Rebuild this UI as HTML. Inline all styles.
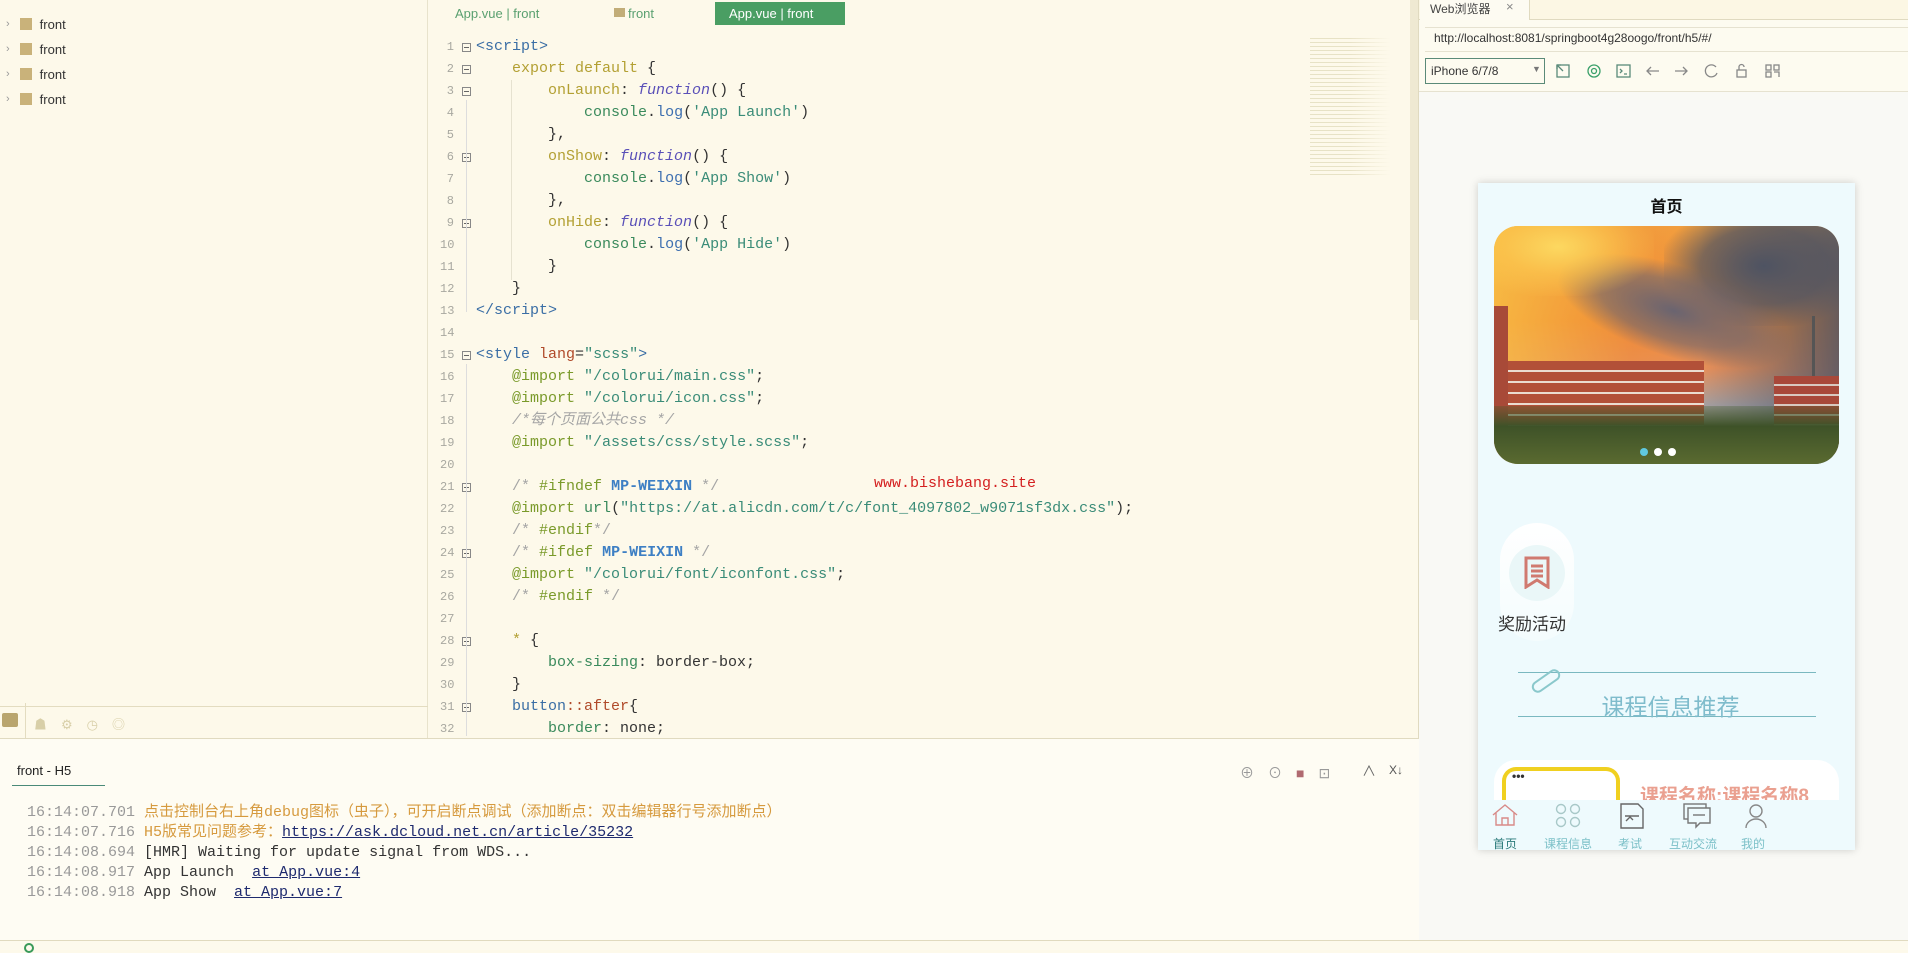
<!DOCTYPE html>
<html><head><meta charset="utf-8">
<style>
*{margin:0;padding:0;box-sizing:border-box}
body{width:1908px;height:950px;overflow:hidden;background:#fdf9ea;font-family:"Liberation Sans","Noto Sans CJK SC",sans-serif;position:relative}
.abs{position:absolute}
.mono{font-family:"Liberation Mono","Noto Sans CJK SC",monospace}
.side-row{position:absolute;left:0;height:22px;font-size:13px;color:#333;display:flex;align-items:center}
.code{position:absolute;left:440px;top:36px;font-size:15px;line-height:22px;white-space:pre;color:#333}
.fold{position:absolute;left:462px;width:9px;height:9px;border:1px solid #888;font-size:0}
.fold:after{content:"";position:absolute;left:1px;top:3px;width:5px;height:1px;background:#666}
.k{color:#b3a033}.f{color:#5a50b8;font-style:italic}.g{color:#3a8a5c}.b{color:#3d6fb0}.s{color:#3a8c78}.t{color:#3a6ea5}.c{color:#a5a5a5}.m{color:#3d7fc4;font-weight:bold}.r{color:#b04a2a}.p{color:#7a9a2a}
.log{position:absolute;left:27px;font-size:15px;line-height:20px;color:#333;white-space:pre}
.nav{position:absolute;top:800px;width:70px;text-align:center;font-size:12px;color:#7cc0c8}
</style></head><body>
<div class="abs" style="left:0;top:0;width:428px;height:739px;background:#fdf9ea;border-right:1px solid #e8e3cc"></div>
<div class="side-row" style="top:13px"><span style="margin-left:6px;color:#999;font-size:11px">›</span><span style="display:inline-block;width:12px;height:12px;background:#c9b27a;margin-left:10px"></span><span style="margin-left:8px">front</span></div>
<div class="side-row" style="top:38px"><span style="margin-left:6px;color:#999;font-size:11px">›</span><span style="display:inline-block;width:12px;height:12px;background:#c9b27a;margin-left:10px"></span><span style="margin-left:8px">front</span></div>
<div class="side-row" style="top:63px"><span style="margin-left:6px;color:#999;font-size:11px">›</span><span style="display:inline-block;width:12px;height:12px;background:#c9b27a;margin-left:10px"></span><span style="margin-left:8px">front</span></div>
<div class="side-row" style="top:88px"><span style="margin-left:6px;color:#999;font-size:11px">›</span><span style="display:inline-block;width:12px;height:12px;background:#c9b27a;margin-left:10px"></span><span style="margin-left:8px">front</span></div>
<div class="abs" style="left:0;top:706px;width:428px;height:33px;border-top:1px solid #e3dcc0"></div>
<div class="abs" style="left:2px;top:713px;width:16px;height:14px;background:#b9a56e;border-radius:2px"></div>
<div class="abs" style="left:25px;top:703px;width:1px;height:36px;background:#e3dcc0"></div>
<div class="abs" style="left:34px;top:714px;font-size:13px;color:#d8cfa8;letter-spacing:14px">☗⚙◷◎</div>

<div class="abs" style="left:455px;top:6px;font-size:13px;color:#5aa070">App.vue | front</div>
<div class="abs" style="left:614px;top:8px;width:11px;height:9px;background:#c2ad78"></div>
<div class="abs" style="left:628px;top:6px;font-size:13px;color:#5aa070">front</div>
<div class="abs" style="left:715px;top:2px;width:130px;height:23px;background:#4a9e63"></div>
<div class="abs" style="left:729px;top:6px;font-size:13px;color:#fff">App.vue | front</div>

<div class="mono" style="position:absolute;left:440px;top:36px;width:14px;font-size:12px;line-height:22px;color:#a8a8a0;text-align:right">1<br>2<br>3<br>4<br>5<br>6<br>7<br>8<br>9<br>10<br>11<br>12<br>13<br>14<br>15<br>16<br>17<br>18<br>19<br>20<br>21<br>22<br>23<br>24<br>25<br>26<br>27<br>28<br>29<br>30<br>31<br>32</div>
<div class="fold" style="top:43px"></div><div class="fold" style="top:65px"></div><div class="fold" style="top:87px"></div><div class="fold" style="top:153px"></div><div class="fold" style="top:219px"></div><div class="fold" style="top:351px"></div><div class="fold" style="top:483px"></div><div class="fold" style="top:549px"></div><div class="fold" style="top:637px"></div><div class="fold" style="top:703px"></div>
<div class="abs" style="left:466px;top:100px;width:1px;height:212px;background:#ddd"></div>
<div class="abs" style="left:466px;top:364px;width:1px;height:372px;background:#ddd"></div>
<div class="abs" style="left:511px;top:80px;width:1px;height:200px;background:#e6e2d0"></div>

<div class="code mono" style="left:476px"><span class="t">&lt;script&gt;</span>
    <span class="k">export default</span> {
        <span class="k">onLaunch</span>: <span class="f">function</span>() {
            <span class="g">console</span>.<span class="b">log</span>(<span class="s">'App Launch'</span>)
        },
        <span class="k">onShow</span>: <span class="f">function</span>() {
            <span class="g">console</span>.<span class="b">log</span>(<span class="s">'App Show'</span>)
        },
        <span class="k">onHide</span>: <span class="f">function</span>() {
            <span class="g">console</span>.<span class="b">log</span>(<span class="s">'App Hide'</span>)
        }
    }
<span class="t">&lt;/script&gt;</span>

<span class="t">&lt;style</span> <span class="r">lang</span>=<span class="s">"scss"</span><span class="t">&gt;</span>
    <span class="p">@import</span> <span class="s">"/colorui/main.css"</span>;
    <span class="p">@import</span> <span class="s">"/colorui/icon.css"</span>;
    <span class="c" style="font-style:italic">/*每个页面公共css */</span>
    <span class="p">@import</span> <span class="s">"/assets/css/style.scss"</span>;

    <span class="c">/* </span><span class="p">#ifndef</span> <span class="m">MP-WEIXIN</span> <span class="c">*/</span>
    <span class="p">@import</span> <span class="g">url</span>(<span class="s">"https://at.alicdn.com/t/c/font_4097802_w9071sf3dx.css"</span>);
    <span class="c">/* </span><span class="p">#endif</span><span class="c">*/</span>
    <span class="c">/* </span><span class="p">#ifdef</span> <span class="m">MP-WEIXIN</span> <span class="c">*/</span>
    <span class="p">@import</span> <span class="s">"/colorui/font/iconfont.css"</span>;
    <span class="c">/* </span><span class="p">#endif</span> <span class="c">*/</span>

    <span class="k">*</span> {
        <span class="g">box-sizing</span>: border-box;
    }
    <span class="t">button</span><span class="r">::after</span>{
        <span class="g">border</span>: none;</div>
<div class="abs mono" style="left:874px;top:475px;font-size:15px;color:#d42020">www.bishebang.site</div>

<div class="abs" style="left:1310px;top:38px;width:100px;height:140px;opacity:.4;background:repeating-linear-gradient(180deg,#c8c090 0 1px,transparent 1px 4px);-webkit-mask:linear-gradient(90deg,#000 40%,transparent 80%)"></div>
<div class="abs" style="left:1410px;top:0;width:8px;height:320px;background:#efe9d2"></div>
<div class="abs" style="left:1418px;top:0;width:1px;height:940px;background:#e0dac0"></div>

<div class="abs" style="left:0;top:738px;width:1419px;height:1px;background:#e0dac0"></div>
<div class="abs" style="left:0;top:739px;width:1419px;height:201px;background:#fefcf3"></div>
<div class="abs" style="left:17px;top:763px;font-size:13px;color:#222">front - H5</div>
<div class="abs" style="left:12px;top:785px;width:93px;height:1px;background:#4a8a78"></div>
<div class="abs" style="left:1240px;top:763px;font-size:14px;color:#999;letter-spacing:14px">⊕⊙<span style="color:#b06a70">■</span>⊡</div>
<div class="abs" style="left:1362px;top:761px;font-size:14px;color:#666">∧</div>
<div class="abs" style="left:1389px;top:763px;font-size:12px;color:#555">X↓</div>
<div class="log mono" style="top:803px"><span style="color:#999">16:14:07.701 </span><span style="color:#d69a3e">点击控制台右上角debug图标（虫子），可开启断点调试（添加断点：双击编辑器行号添加断点）</span></div>
<div class="log mono" style="top:823px"><span style="color:#999">16:14:07.716 </span><span style="color:#d69a3e">H5版常见问题参考：</span><span style="color:#1e2a6e;text-decoration:underline">https://ask.dcloud.net.cn/article/35232</span></div>
<div class="log mono" style="top:843px"><span style="color:#999">16:14:08.694 </span>[HMR] Waiting for update signal from WDS...</div>
<div class="log mono" style="top:863px"><span style="color:#999">16:14:08.917 </span>App Launch  <span style="color:#1e2a6e;text-decoration:underline">at App.vue:4</span></div>
<div class="log mono" style="top:883px"><span style="color:#999">16:14:08.918 </span>App Show  <span style="color:#1e2a6e;text-decoration:underline">at App.vue:7</span></div>

<div class="abs" style="left:0;top:940px;width:1908px;height:10px;background:#fdfaee;border-top:1px solid #e0dac0"></div>
<div class="abs" style="left:24px;top:943px;width:10px;height:10px;border:2px solid #3a9a5a;border-radius:50%"></div>

<div class="abs" style="left:1419px;top:0;width:489px;height:940px;background:#f9f9f5"></div>
<div class="abs" style="left:1419px;top:0;width:489px;height:20px;background:#fcf7e4;border-bottom:1px solid #e0dac0"></div>
<div class="abs" style="left:1420px;top:0;width:110px;height:20px;background:#fdfbf2;border-right:1px solid #e0dac0"></div>
<div class="abs" style="left:1430px;top:0;font-size:12px;color:#444">Web浏览器</div>
<div class="abs" style="left:1506px;top:-1px;font-size:13px;color:#888">×</div>
<div class="abs" style="left:1419px;top:20px;width:489px;height:72px;background:#fdfbf0"></div>
<div class="abs" style="left:1425px;top:27px;width:483px;height:25px;border-top:1px solid #e6e2d0;border-bottom:1px solid #e6e2d0"></div>
<div class="abs" style="left:1434px;top:31px;font-size:12px;color:#333">http://localhost:8081/springboot4g28oogo/front/h5/#/</div>
<div class="abs" style="left:1425px;top:58px;width:120px;height:26px;border:1px solid #5a8a78;background:#fdfbf0"></div>
<div class="abs" style="left:1431px;top:64px;font-size:12px;color:#333">iPhone 6/7/8</div>
<div class="abs" style="left:1532px;top:64px;font-size:9px;color:#777">▼</div>
<svg class="abs" style="left:1555px;top:62px" width="230" height="18" viewBox="0 0 230 18" fill="none" stroke-width="1.3">
<g stroke="#5a8a7a"><rect x="2" y="3" width="12" height="12"/><path d="M2 3l6 6M2 3h4M2 3v4"/></g>
<g stroke="#3aa06a"><circle cx="39" cy="9" r="6"/><circle cx="39" cy="9" r="2.5"/></g>
<g stroke="#5a8a7a"><rect x="62" y="3" width="13" height="12"/><path d="M65 7l2 2-2 2M69 12h3"/></g>
<g stroke="#888"><path d="M104 9h-12M96 5l-4 4 4 4"/><path d="M120 9h12M128 5l4 4-4 4"/><path d="M161 5a6 6 0 1 0 1 6"/><rect x="182" y="8" width="9" height="7"/><path d="M184 8V5a2.5 2.5 0 0 1 5 0"/><rect x="211" y="3" width="5" height="5"/><rect x="219" y="3" width="5" height="5"/><rect x="211" y="10" width="5" height="5"/><path d="M219 10h5v5"/></g>
</svg>
<div class="abs" style="left:1419px;top:91px;width:489px;height:1px;background:#e6e2d0"></div>

<div class="abs" style="left:1478px;top:183px;width:377px;height:667px;background:#eefafd;box-shadow:0 0 8px rgba(0,0,0,.18);overflow:hidden">
  <div class="abs" style="left:0;top:10px;width:377px;text-align:center;font-size:16px;font-weight:bold;color:#111">首页</div>
  <div class="abs" style="left:16px;top:43px;width:345px;height:238px;border-radius:24px;overflow:hidden;background:linear-gradient(180deg,#f2a040 0%,#f08a36 40%,#e8905a 60%,#a8a0a0 75%)">
    <div class="abs" style="left:0;top:0;width:345px;height:238px;background:linear-gradient(90deg,rgba(250,200,70,.7) 0%,rgba(240,140,50,.3) 40%,rgba(90,100,120,.0) 60%,rgba(70,80,100,.8) 100%)"></div>
    <div class="abs" style="left:170px;top:-20px;width:200px;height:120px;background:radial-gradient(ellipse,#4e5362 0%,rgba(78,83,98,.7) 45%,transparent 75%)"></div>
    <div class="abs" style="left:60px;top:40px;width:240px;height:90px;transform:rotate(18deg);background:radial-gradient(ellipse,#6a6470 0%,rgba(106,100,112,.6) 45%,transparent 72%)"></div>
    <div class="abs" style="left:0;top:0;width:160px;height:70px;background:radial-gradient(ellipse at 40% 30%,#fcd860 0%,rgba(252,200,80,.6) 40%,transparent 75%)"></div>
    <div class="abs" style="left:10px;top:135px;width:200px;height:90px;background:repeating-linear-gradient(180deg,#b25038 0 9px,#eadcd0 9px 11px)"></div>
    <div class="abs" style="left:0;top:80px;width:14px;height:150px;background:#a84a38"></div>
    <div class="abs" style="left:280px;top:150px;width:65px;height:80px;background:repeating-linear-gradient(180deg,#a8483a 0 8px,#d8c8c0 8px 10px)"></div>
    <div class="abs" style="left:318px;top:90px;width:3px;height:60px;background:#555"></div>
    <div class="abs" style="left:0;top:180px;width:345px;height:58px;background:linear-gradient(180deg,rgba(60,90,40,.3),#3e5228 35%,#5a6a30)"></div>
    <div class="abs" style="left:146px;top:222px;width:8px;height:8px;border-radius:50%;background:#60c8e0"></div>
    <div class="abs" style="left:160px;top:222px;width:8px;height:8px;border-radius:50%;background:#fff"></div>
    <div class="abs" style="left:174px;top:222px;width:8px;height:8px;border-radius:50%;background:#fff"></div>
  </div>
  <div class="abs" style="left:22px;top:340px;width:74px;height:118px;border-radius:37px;background:linear-gradient(180deg,#fff,#f4fcfd)"></div>
  <div class="abs" style="left:31px;top:362px;width:56px;height:56px;border-radius:50%;background:#eaf7f8"></div>
  <svg class="abs" style="left:46px;top:373px" width="26" height="33" viewBox="0 0 26 33" fill="none" stroke="#d07a70" stroke-width="3"><path d="M2 2h22v29l-11-7-11 7z"/><path d="M7 10h12M7 15h12M7 20h12"/></svg>
  <div class="abs" style="left:20px;top:427px;font-size:17px;color:#333">奖励活动</div>
  <div class="abs" style="left:40px;top:489px;width:298px;height:1px;background:#7ab8c0"></div>
  <div class="abs" style="left:40px;top:533px;width:298px;height:1px;background:#7ab8c0"></div>
  <div class="abs" style="left:52px;top:492px;width:32px;height:12px;border:2px solid #8ac8cc;border-radius:7px;transform:rotate(-35deg)"></div>
  <div class="abs" style="left:0;top:505px;width:377px;text-align:center;font-size:23px;color:#7fbccc;padding-left:8px">课程信息推荐</div>
  <div class="abs" style="left:16px;top:577px;width:345px;height:80px;border-radius:22px;background:#fff"></div>
  <div class="abs" style="left:24px;top:584px;width:118px;height:60px;border-radius:14px 14px 0 0;border:4px solid #f0d020;border-bottom:none;background:#fff"></div>
  <div class="abs" style="left:34px;top:586px;font-size:12px;color:#333;font-weight:bold">•••</div>
  <div class="abs" style="left:162px;top:598px;font-size:19px;font-weight:bold;color:#eaa090">课程名称:课程名称8</div>
  <div class="abs" style="left:0;top:617px;width:377px;height:50px;background:#eefafd"></div>
  <svg class="abs" style="left:0;top:620px" width="377" height="26" viewBox="0 0 377 26" fill="none" stroke-width="1.4">
    <g stroke="#d88a88"><path d="M15 12L27 2l12 10M18 10v12h18V10M24 22v-7h6v7"/></g>
    <g stroke="#a8c8c8"><circle cx="83" cy="6" r="4.5"/><circle cx="97" cy="6" r="4.5"/><circle cx="83" cy="19" r="4.5"/><circle cx="97" cy="19" r="4.5"/></g>
    <g stroke="#666"><path d="M143 1h17l5 5v19h-22z"/><path d="M147 13h14M148 18l4-4 3 3"/></g>
    <g stroke="#777"><rect x="206" y="1" width="22" height="15"/><path d="M210 5h22v15h-10l-4 4v-4h-8z" fill="#eefafd"/><path d="M215 12h12"/></g>
    <g stroke="#888"><circle cx="278" cy="8" r="6"/><path d="M268 25a10 9 0 0 1 20 0"/></g>
  </svg>
  <div class="nav" style="left:-8px;top:652px;color:#2a7a7a">首页</div>
  <div class="nav" style="left:55px;top:652px">课程信息</div>
  <div class="nav" style="left:117px;top:652px">考试</div>
  <div class="nav" style="left:180px;top:652px">互动交流</div>
  <div class="nav" style="left:240px;top:652px">我的</div>
</div>
</body></html>
